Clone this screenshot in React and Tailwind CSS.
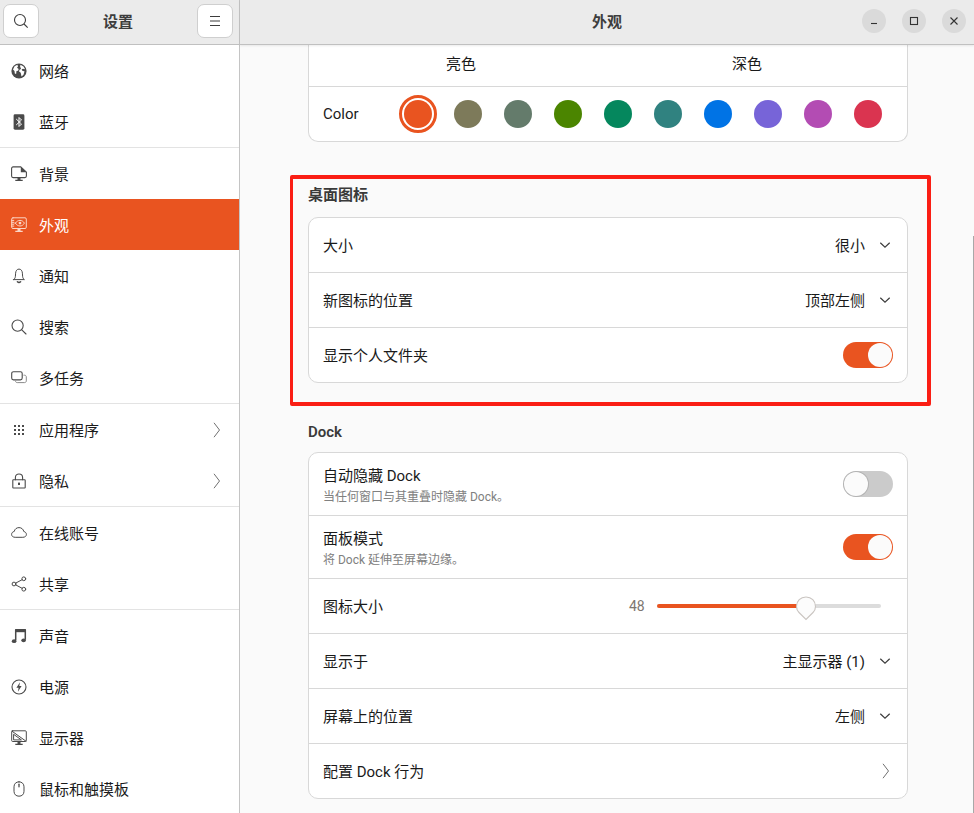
import React from "react";

const FONT = { fontFamily: 'Roboto,"Noto Sans CJK SC",sans-serif' };

function Svg({ children, size = 16 }) {
  return (
    <svg width={size} height={size} viewBox="0 0 16 16" fill="none" stroke="currentColor" strokeWidth="1" strokeLinecap="round" strokeLinejoin="round">
      {children}
    </svg>
  );
}

const icons = {
  globe: (
    <Svg>
      <circle cx="8" cy="8" r="7.6" fill="currentColor" stroke="none" />
      <path d="M2 6.500 3.600 3.200l2.800-1.500.6 1.800-1 1.300 1.700 1.300-.6 1.700-1.600.3-.4 2.900-1.300-.6-.3-2.500zM9.500 1.700l3 1.700 1.600 2.800-2.200-.5-1.300.7 1 1.700 1.900.2-1 3.400-2 1.700-.8-3.600-1.800-1.500.9-1.700 1.300-.6-1-2.600z" fill="#fff" stroke="none" />
    </Svg>
  ),
  bluetooth: (
    <Svg>
      <rect x="2.600" y="0.300" width="10.800" height="15.400" rx="1.400" fill="currentColor" stroke="none" />
      <path d="M5.500 5.300 10.500 10 8 12.500v-9L10.500 6 5.500 10.700" stroke="#fff" strokeWidth="1" />
    </Svg>
  ),
  background: (
    <Svg>
      <path d="M9.800.9H2.100C1.200.9.600 1.500.600 2.400v7.700c0 .9.600 1.500 1.500 1.500h11.800c.9 0 1.500-.6 1.500-1.500V6.200z" stroke="currentColor" strokeWidth="1.100" />
      <path d="M9.800 .9 15.400 6.200H9.800z" fill="currentColor" stroke="none" />
      <path d="M6.500 11.800h3v1.900h2.200v1.200H4.300v-1.200h2.200z" fill="currentColor" stroke="none" />
    </Svg>
  ),
  appearance: (
    <Svg>
      <rect x="0.700" y="0.800" width="14.600" height="10.700" rx="1.300" />
      <path d="M0.800 3.400h2M0.800 5.300h2M0.800 7.200h2M0.800 9.100h2" />
      <path d="M4.300 6.100C5.700 4.200 7.300 3.400 9 3.400s3.300.9 4.400 2.700C12.300 8 10.800 9 9 9S5.600 8 4.300 6.100z" />
      <circle cx="9" cy="6.100" r="1.400" fill="currentColor" stroke="none" />
      <path d="M6.500 11.800h3v1.900h2.200v1.200H4.300v-1.200h2.200z" fill="currentColor" stroke="none" />
    </Svg>
  ),
  bell: (
    <Svg>
      <path d="M2.600 11.600h10.800c-1.100-.8-1.700-1.800-1.800-3.300l-.2-3.100C11.200 2.700 10 1.100 8 1.100S4.800 2.700 4.600 5.200l-.2 3.100c-.1 1.500-.7 2.500-1.800 3.300z" />
      <path d="M6.400 13.700c.8.700 2.400.7 3.200 0" strokeWidth="1.400" />
    </Svg>
  ),
  search: (
    <Svg>
      <circle cx="6.600" cy="6.600" r="5.600" strokeWidth="1.100" />
      <path d="m10.800 10.800 4.200 4.200" strokeWidth="1.100" />
    </Svg>
  ),
  multitask: (
    <Svg>
      <rect x="0.700" y="1.700" width="10.500" height="8.200" rx="1.800" strokeWidth="1.100" />
      <path d="M12.900 5.200h.7c.9 0 1.700.7 1.700 1.700v4c0 1-.8 1.700-1.700 1.700H6.200c-1 0-1.700-.6-1.700-1.500" stroke="#8a8a8a" />
    </Svg>
  ),
  apps: (
    <Svg>
      {[3, 7, 11].map((y) =>
        [3, 7, 11].map((x) => <rect key={x + "-" + y} x={x} y={y} width="2" height="2" fill="currentColor" stroke="none" />)
      )}
    </Svg>
  ),
  lock: (
    <Svg>
      <path d="M4.400 6.800V4.600C4.400 2.400 6 1 8 1s3.600 1.400 3.600 3.600v2.200" strokeWidth="1.100" />
      <rect x="1.800" y="6.800" width="12.400" height="8.200" rx="0.600" strokeWidth="1.100" />
      <rect x="7" y="9.600" width="2" height="2.400" fill="currentColor" stroke="none" />
    </Svg>
  ),
  cloud: (
    <Svg>
      <path d="M3.800 12.300C1.900 12.300.6 11 .6 9.400c0-1.500 1.100-2.700 2.600-2.900C3.700 4 5.700 2.600 8 2.600c2.500 0 4.400 1.700 4.800 3.900 1.500.3 2.600 1.500 2.600 2.900 0 1.600-1.300 2.900-3.200 2.900z" />
    </Svg>
  ),
  share: (
    <Svg>
      <circle cx="3" cy="8" r="1.900" />
      <circle cx="12.800" cy="2.800" r="1.900" />
      <circle cx="12.800" cy="13.200" r="1.900" />
      <path d="m4.700 7.100 6.400-3.400M4.700 8.900l6.400 3.400" />
    </Svg>
  ),
  music: (
    <Svg>
      <path d="M4.700 12.600V1.800h9.600v10" strokeWidth="1.500" strokeLinecap="butt" />
      <path d="M4.700 1h9.600v3.200H4.700z" fill="currentColor" stroke="none" />
      <ellipse cx="3.100" cy="13.200" rx="2.300" ry="1.900" fill="currentColor" stroke="none" />
      <ellipse cx="12.600" cy="12.300" rx="2.300" ry="1.900" fill="currentColor" stroke="none" />
    </Svg>
  ),
  power: (
    <Svg>
      <circle cx="8" cy="8" r="7" strokeWidth="1.100" />
      <path d="M9 3.200 5.400 8.800h2.200L6.900 12.800l3.700-5.700H8.300z" fill="currentColor" stroke="none" />
    </Svg>
  ),
  display: (
    <Svg>
      <rect x="0.700" y="0.800" width="14.600" height="10.700" rx="1" />
      <path d="M1 1.200 15 11.200M2.600 4.700v5.200h7.400z" />
      <path d="M6.500 11.800h3v1.900h2.200v1.200H4.300v-1.200h2.200z" fill="currentColor" stroke="none" />
    </Svg>
  ),
  mouse: (
    <Svg>
      <path d="M8 .8C5 .8 3 2.800 3 5.800v4.500c0 3 2 4.900 5 4.900s5-1.900 5-4.900V5.800C13 2.800 11 .8 8 .8z" />
      <path d="M8 3.200v2.600" strokeWidth="1.300" />
    </Svg>
  ),
};

const BigChevron = () => (
  <svg width="8" height="16" viewBox="0 0 8 16" fill="none" stroke="#707070" strokeWidth="1">
    <path d="M1 .8l5.500 7.200L1 15.200" />
  </svg>
);

const Down = () => (
  <svg width="12" height="8" viewBox="0 0 12 8" fill="none" stroke="#3d3d3d" strokeWidth="1.200">
    <path d="M1.300 1.700 6 6.200l4.700-4.500" />
  </svg>
);

function NavItem({ icon, label, arrow, active }) {
  return (
    <div className={"flex h-[51px] items-center pl-[11px] pr-[18px] text-[15px] " + (active ? "bg-[#e95420] text-white" : "text-[#1a1a1a]")}>
      <span className={"flex w-[28px] shrink-0 " + (active ? "text-[#fbd5c6]" : "text-[#4a4a4a]")}>{icons[icon]}</span>
      <span className="flex-1 pt-[4px]">{label}</span>
      {arrow && <BigChevron />}
    </div>
  );
}

const Sep = () => <div className="h-px bg-[#e3e3e3]" />;

function Toggle({ on }) {
  return (
    <div className={"flex h-[26px] w-[50px] items-center rounded-full p-[1px] " + (on ? "justify-end bg-[#e95420]" : "justify-start bg-[#cbcbcb]")}>
      <div className={"h-[24px] w-[24px] rounded-full bg-[#fbfbfb] " + (on ? "" : "shadow-[0_0_0_1px_rgba(0,0,0,0.12)]")} />
    </div>
  );
}

function Row({ label, sub, h = "h-[55px]", children, last }) {
  return (
    <div className={"flex items-center justify-between px-[14px] " + h + (last ? "" : " border-b border-[#d8d8d8]")}>
      <div className={sub ? "" : "pt-[2px]"}>
        <div className="text-[15px] leading-[24px] text-[#1a1a1a]">{label}</div>
        {sub && <div className="pt-[1px] text-[12px] leading-[16px] text-[#808080]">{sub}</div>}
      </div>
      {children}
    </div>
  );
}

function Select({ value }) {
  return (
    <div className="mr-[2px] flex items-center gap-[14px] text-[15px] text-[#1a1a1a]">
      <span className="pt-[2px]">{value}</span>
      <Down />
    </div>
  );
}

const Card = ({ children, className = "" }) => (
  <div className={"overflow-hidden rounded-[10px] border border-[#d8d8d8] bg-white " + className}>{children}</div>
);

const Heading = ({ children, className }) => <div className={"text-[15px] font-semibold leading-[20px] text-[#3a3a3a] " + className}>{children}</div>;

const colors = ["#e95420", "#7d7a5a", "#647b6b", "#4b8500", "#05875d", "#308280", "#0073e5", "#7764d8", "#b34cb3", "#da3450"];

function WinBtn({ children }) {
  return (
    <div className="flex h-[24px] w-[24px] items-center justify-center rounded-full bg-[#dadada] text-[#333]">
      <svg width="12" height="12" viewBox="0 0 12 12" fill="none" stroke="currentColor" strokeWidth="1.100">{children}</svg>
    </div>
  );
}

function HeaderBtn({ children }) {
  return (
    <div className="flex h-[34px] w-[36px] items-center justify-center rounded-[7px] border border-[#cfcfcf] bg-white text-[#3d3d3d]">{children}</div>
  );
}

export default function App() {
  return (
    <div className="relative flex h-[813px] w-[974px] overflow-hidden bg-[#fafafa]" style={FONT}>
      <aside className="flex h-full w-[240px] shrink-0 flex-col border-r border-[#c4c4c4] bg-white">
        <header className="flex h-[45px] shrink-0 items-center justify-between border-b border-[#c0c0c0] bg-[#ebebeb] pb-[2px] pl-[3px] pr-[6px]">
          <HeaderBtn>
            <svg width="16" height="16" viewBox="0 0 16 16" fill="none" stroke="currentColor" strokeWidth="1.100">
              <circle cx="7" cy="7" r="5.500" />
              <path d="m11 11 3.700 3.700" />
            </svg>
          </HeaderBtn>
          <span className="pt-[2px] text-[15px] font-bold text-[#3d3d3d]">设置</span>
          <HeaderBtn>
            <svg width="12" height="12" viewBox="0 0 12 12" fill="none" stroke="currentColor" strokeWidth="1">
              <path d="M1 1.500h10M1 6h10M1 10.500h10" />
            </svg>
          </HeaderBtn>
        </header>
        <nav className="flex flex-col">
          <NavItem icon="globe" label="网络" />
          <NavItem icon="bluetooth" label="蓝牙" />
          <Sep />
          <NavItem icon="background" label="背景" />
          <NavItem icon="appearance" label="外观" active />
          <NavItem icon="bell" label="通知" />
          <NavItem icon="search" label="搜索" />
          <NavItem icon="multitask" label="多任务" />
          <Sep />
          <NavItem icon="apps" label="应用程序" arrow />
          <NavItem icon="lock" label="隐私" arrow />
          <Sep />
          <NavItem icon="cloud" label="在线账号" />
          <NavItem icon="share" label="共享" />
          <Sep />
          <NavItem icon="music" label="声音" />
          <NavItem icon="power" label="电源" />
          <NavItem icon="display" label="显示器" />
          <NavItem icon="mouse" label="鼠标和触摸板" />
        </nav>
      </aside>

      <main className="flex min-w-0 flex-1 flex-col">
        <header className="relative flex h-[45px] shrink-0 items-center justify-center border-b border-[#c0c0c0] bg-[#ebebeb] pb-[2px] shadow-[0_1px_2px_rgba(0,0,0,0.08)]">
          <span className="pt-[2px] text-[15px] font-bold text-[#3d3d3d]">外观</span>
          <div className="absolute right-[8px] top-[9px] flex gap-[16px]">
            <WinBtn><path d="M3 8.500h6" /></WinBtn>
            <WinBtn><rect x="2.500" y="2.500" width="7" height="7" /></WinBtn>
            <WinBtn><path d="m2.500 2.500 7 7M9.500 2.500l-7 7" /></WinBtn>
          </div>
        </header>

        <div className="flex flex-col pl-[68px] pr-[66px]">
          <Card className="rounded-t-none border-t-0">
            <div className="grid h-[42px] grid-cols-2 border-b border-[#d8d8d8] pl-[9px] pr-[17px] text-center text-[15px] leading-[39px] text-[#1a1a1a]">
              <span>亮色</span>
              <span>深色</span>
            </div>
            <div className="flex h-[54px] items-center pl-[14px]">
              <span className="w-[81px] text-[15px] text-[#1a1a1a]">Color</span>
              <div className="flex gap-[22px]">
                {colors.map((c, i) => (
                  <div key={c} className={"h-[28px] w-[28px] rounded-full " + (i === 0 ? "outline-[3px] outline-offset-[2px] outline-[#e95420]" : "")} style={{ backgroundColor: c }} />
                ))}
              </div>
            </div>
          </Card>

          <div className="mt-[43px]">
            <Heading className="h-[32px]">桌面图标</Heading>
            <Card>
              <Row label="大小"><Select value="很小" /></Row>
              <Row label="新图标的位置"><Select value="顶部左侧" /></Row>
              <Row label="显示个人文件夹" h="h-[54px]" last><Toggle on /></Row>
            </Card>
          </div>

          <div className="mt-[38px]">
            <Heading className="h-[31px] pt-[1px]">Dock</Heading>
            <Card>
              <Row label="自动隐藏 Dock" sub="当任何窗口与其重叠时隐藏 Dock。" h="h-[63px]"><Toggle /></Row>
              <Row label="面板模式" sub="将 Dock 延伸至屏幕边缘。" h="h-[63px]"><Toggle on /></Row>
              <Row label="图标大小">
                <div className="flex items-center">
                  <span className="w-[28px] text-[14px] text-[#7d7670]">48</span>
                  <div className="relative flex h-[4px] w-[224px] rounded-full bg-[#dcdcdc]">
                    <div className="h-[4px] w-[149px] rounded-full bg-[#e95420]" />
                    <svg className="absolute left-[138px] top-[-8px]" width="22" height="25" viewBox="0 0 22 25">
                      <path d="M11 1C5.500 1 1.500 5 1.500 10.500c0 2.500.8 4.400 2.500 6L11 23.500l7-7c1.700-1.600 2.500-3.500 2.500-6C20.500 5 16.500 1 11 1z" fill="#fcfcfc" stroke="#c9c4c0" strokeWidth="1.100" />
                    </svg>
                  </div>
                  <span className="w-[12px]" />
                </div>
              </Row>
              <Row label="显示于"><Select value="主显示器 (1)" /></Row>
              <Row label="屏幕上的位置"><Select value="左侧" /></Row>
              <Row label="配置 Dock 行为" h="h-[54px]" last><span className="mr-[3px] flex"><BigChevron /></span></Row>
            </Card>
          </div>
        </div>

        <div className="absolute left-[290px] top-[175px] h-[231px] w-[641px] rounded-[2px] border-[4px] border-l-[3px] border-[#fa1e14]" />
        <div className="absolute right-0 top-[236px] h-[577px] w-px bg-[#a8a8a8]" />
      </main>
    </div>
  );
}
